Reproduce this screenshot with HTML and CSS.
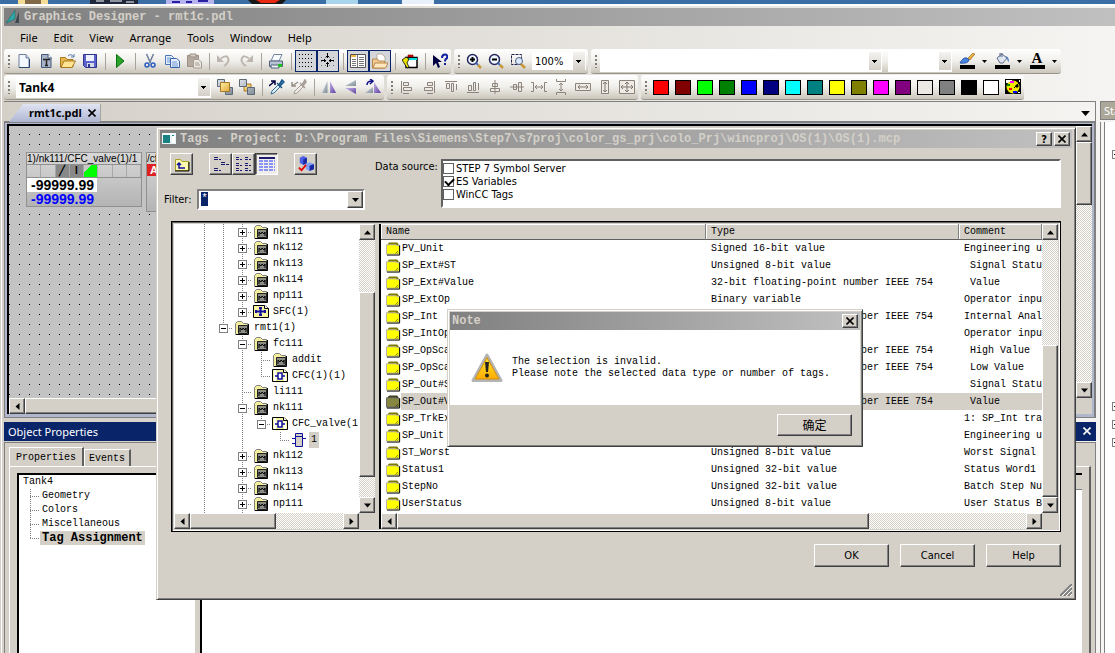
FILE: index.html
```
<!DOCTYPE html>
<html lang="en">
<head>
    <meta charset="UTF-8">
    <meta name="viewport" content="width=device-width, initial-scale=1.0">
    <title>Graphics Designer - rmt1c.pdl</title>
    <link rel="stylesheet" href="styles.css">
</head>
<body>
    <svg class="defs" aria-hidden="true">
        <defs>
            <linearGradient id="gold" x2="1" y2="1"><stop offset="0" stop-color="#fff0a8"/><stop offset="1" stop-color="#e0a838"/></linearGradient>
            <linearGradient id="steel" x2="1" y2="1"><stop offset="0" stop-color="#dde3ea"/><stop offset="1" stop-color="#7f8c98"/></linearGradient>
            <linearGradient id="violet" x2="1" y2="1"><stop offset="0" stop-color="#c8b8ec"/><stop offset="1" stop-color="#5c3ca0"/></linearGradient>
            <linearGradient id="warn" x2="0" y2="1"><stop offset="0" stop-color="#ffee30"/><stop offset="1" stop-color="#ffa800"/></linearGradient>
        </defs>
        <symbol id="new" viewBox="0 0 16 16"><path d="M3 1.500h7l3 3.500v9.500H3z" fill="#f4f8ff" stroke="#6d7f9c"/><path d="M10 1.500v3.500h3" fill="#cdd8ea" stroke="#6d7f9c"/><path d="M3 14.500h10.500V6" fill="none" stroke="#2e4670"/></symbol>
        <symbol id="tpl" viewBox="0 0 16 16"><path d="M3.500 1.500h7l2.500 3v10H3.500z" fill="#a9b3c8" stroke="#46587c"/><path d="M10 1v4h4" fill="#fff" stroke="#46587c"/><path d="M5 6.500h7M8.500 6.500v6M7 12.500h3" stroke="#222" stroke-width="1.500"/></symbol>
        <symbol id="open" viewBox="0 0 16 16"><path d="M0.500 14V4.500h5l1.500 2h6V14z" fill="#e9b84c" stroke="#a87820"/><path d="M1 14.500L4 8h11.500L12 14.500z" fill="#ffe592" stroke="#a87820"/><path d="M8 3q3-3 6 1M14 1v3h-3" fill="none" stroke="#5b7fae"/></symbol>
        <symbol id="save" viewBox="0 0 16 16"><path d="M1.500 1.500h13v13h-11l-2-2z" fill="#5c63cc" stroke="#30358c"/><path d="M4 2h8v6H4z" fill="#eef2ff"/><path d="M5 10h7v4H5z" fill="#d5d9e8"/><path d="M6 11h2v3H6z" fill="#30358c"/></symbol>
        <symbol id="play" viewBox="0 0 16 16"><path d="M4.500 1.500L12 8l-7.500 6.500z" fill="#2aa52a" stroke="#0b7010"/></symbol>
        <symbol id="cut" viewBox="0 0 16 16"><path d="M4.500 1l4 9M11.500 1l-4 9" stroke="#6b7f9c" stroke-width="1.500"/><circle cx="5" cy="12" r="2" fill="none" stroke="#2b5fc0" stroke-width="1.500"/><circle cx="11" cy="12" r="2" fill="none" stroke="#2b5fc0" stroke-width="1.500"/></symbol>
        <symbol id="copy" viewBox="0 0 16 16"><path d="M1.500 2.500h6l2 2v7h-8z" fill="#e6effc" stroke="#4a76b8"/><path d="M3 5h4M3 7h4M3 9h4" stroke="#6d97d8"/><path d="M6.500 5.500h6l3 2.500v6.500h-9z" fill="#e6effc" stroke="#3a62a8"/><path d="M8 9h5M8 11h6M8 13h6" stroke="#6d97d8"/></symbol>
        <symbol id="paste" viewBox="0 0 16 16"><path d="M1.500 2.500h11v11h-11z" fill="#b5aaa0" stroke="#9a8f85"/><path d="M4 1h6v3H4z" fill="#d7d0c8" stroke="#9a8f85"/><path d="M7.500 6.500h5l3 2.500v6h-8z" fill="#ece8e2" stroke="#a39a90"/><path d="M9 10h4M9 12h5" stroke="#a39a90"/></symbol>
        <symbol id="undo" viewBox="0 0 16 16"><path d="M5 5.500q5-4 7-.500q2 4-4 8" fill="none" stroke="#bdb6ae" stroke-width="2"/><path d="M1 2v7h7z" fill="#bdb6ae"/></symbol>
        <symbol id="redo" viewBox="0 0 16 16"><path d="M11 5.500q-5-4-7-.500q-2 4 4 8" fill="none" stroke="#bdb6ae" stroke-width="2"/><path d="M15 2v7H8z" fill="#bdb6ae"/></symbol>
        <symbol id="print" viewBox="0 0 16 16"><path d="M6 1.500h8L11 8H3z" fill="#f8fbff" stroke="#7084a0"/><path d="M1.500 8h13v5.500h-13z" fill="#b8c4d4" stroke="#50627c"/><path d="M3 12h8v3H3z" fill="#eef2f6" stroke="#50627c"/><path d="M10 11h4v3h-4z" fill="#20c020"/></symbol>
        <symbol id="grid" viewBox="0 0 16 16"><path d="M1 1.500h15M1 5.500h15M1 9.500h15M1 13.500h15" stroke="#000" stroke-dasharray="1 2"/></symbol>
        <symbol id="snap" viewBox="0 0 16 16"><path d="M1 4.500h16M1 8.500h16M1 12.500h16" stroke="#777" stroke-dasharray="1 3"/><path d="M7.500 0v5M7.500 9v5M1 7.500h5M9 7.500h5" stroke="#000"/><path d="M6 3.500h3M6 10.500h3M4.500 6v3M10.500 6v3" stroke="#000"/></symbol>
        <symbol id="props" viewBox="0 0 16 16"><path d="M0.500 1.500h15v13H.5z" fill="#fff" stroke="#555"/><path d="M1 2h5v2H1z" fill="#f0b840"/><path d="M7.500 2v12" stroke="#777"/><path d="M2 6.500h4M2 8.500h4M2 10.500h4M2 12.500h4M9 4.500h5M9 6.500h5M9 8.500h5M9 10.500h5M9 12.500h5" stroke="#777"/></symbol>
        <symbol id="lib" viewBox="0 0 16 16"><path d="M5 1h5l3 3v6H5z" fill="#fff" stroke="#b8b0a0"/><path d="M.5 6h5l1 2h6v7H.5z" fill="#f0cc98" stroke="#b88848"/><path d="M1 15l2-5h13l-2.500 5z" fill="#ffe8c0" stroke="#b88848"/></symbol>
        <symbol id="dyn" viewBox="0 0 16 16"><path d="M4 4.500h11v10H4z" fill="#fff" stroke="#000" stroke-width="1.500"/><path d="M5 5h10v2H5z" fill="#00e0e0"/><path d="M6 2h5v2H6z" fill="#e00000" stroke="#700" stroke-width=".6"/><path d="M0 7l4-3 3 2-2 4 2 4-2 1-3-5z" fill="#e8e000" stroke="#000" stroke-width=".8"/></symbol>
        <symbol id="what" viewBox="0 0 16 16"><path d="M1 2v11l3-3 2 5 2-1-2-5h4z" fill="#000040"/><path d="M10 5q0-3.500 3-3.500t2 3.500Q13 6 13 8.500M13 10v2" fill="none" stroke="#1020a0" stroke-width="2"/></symbol>
        <symbol id="zin" viewBox="0 0 16 16"><circle cx="6.500" cy="6.500" r="5" fill="#eef6ff" stroke="#26265c" stroke-width="1.500"/><path d="M4 6.500h5M6.500 4v5" stroke="#000" stroke-width="2"/><path d="M10 10l2 2" stroke="#3c6cc0" stroke-width="2"/><path d="M12 12l3 3" stroke="#c89838" stroke-width="2.500"/></symbol>
        <symbol id="zout" viewBox="0 0 16 16"><circle cx="6.500" cy="6.500" r="5" fill="#eef6ff" stroke="#26265c" stroke-width="1.500"/><path d="M4 6.500h5" stroke="#000" stroke-width="2"/><path d="M10 10l2 2" stroke="#3c6cc0" stroke-width="2"/><path d="M12 12l3 3" stroke="#c89838" stroke-width="2.500"/></symbol>
        <symbol id="zarea" viewBox="0 0 16 16"><path d="M1.500 1.500h10v10h-10z" fill="none" stroke="#20204c" stroke-dasharray="3 1"/><circle cx="9" cy="8" r="3.500" fill="#dceafc" stroke="#50608c"/><path d="M11 11l4 4" stroke="#c89838" stroke-width="2.500"/></symbol>
        <symbol id="brush" viewBox="0 0 16 11"><path d="M1 10q3-6 7-5l2 2q-1 4-9 3z" fill="#4a86e0" stroke="#2858a8"/><path d="M9 5l5-5 2 1-5 6z" fill="#e8b040" stroke="#806020" stroke-width=".6"/></symbol>
        <symbol id="bucket" viewBox="0 0 16 11"><path d="M3 5l5-4 5 4-4 5H6z" fill="#dfe6f0" stroke="#5c6c88"/><path d="M6 4V0h2v4" fill="none" stroke="#5c6c88"/><path d="M11 3q4 0 4 6q-2-1-2-4z" fill="#4878c0"/></symbol>
        <symbol id="front" viewBox="0 0 16 16"><path d="M.5.5h7v7h-7zM8.500 8.500h7v7h-7z" fill="url(#steel)" stroke="#5c6874"/><path d="M3.500 3.500h9v9h-9z" fill="url(#gold)" stroke="#a87828"/></symbol>
        <symbol id="back" viewBox="0 0 16 16"><path d="M5 5h7v7H5z" fill="url(#gold)" stroke="#a87828"/><path d="M.5.5h7v7h-7zM8.500 8.500h7v7h-7z" fill="url(#steel)" stroke="#5c6874"/></symbol>
        <symbol id="pick" viewBox="0 0 16 16"><path d="M2 15l1-3 6-6 2 2-6 6z" fill="#d8ecf8" stroke="#3c6c94"/><path d="M8 4l5 5M10 6l3-5 2 2-4 4z" stroke="#1c5888" stroke-width="1.500" fill="#3c90cc"/><path d="M0 7l6-5M2 2h4v4" stroke="#000040" stroke-width="1.500" fill="none"/></symbol>
        <symbol id="drop" viewBox="0 0 16 16"><path d="M3 15l1-3 6-6 2 2-6 6z" fill="#eeeae4" stroke="#a8a098"/><path d="M9 4l5 5M11 6l3-5 1 2-3 4z" stroke="#a8a098" stroke-width="1.500" fill="#b8b0a8"/><path d="M7 3L1 7M1 3v4h4" stroke="#989088" stroke-width="1.500" fill="none"/></symbol>
        <symbol id="fliph" viewBox="0 0 16 16"><path d="M6.500 2v12H1z" fill="url(#steel)"/><path d="M9 2v12h6z" fill="url(#violet)"/></symbol>
        <symbol id="flipv" viewBox="0 0 16 16"><path d="M13 1v6H2z" fill="url(#steel)"/><path d="M13 15V9H2z" fill="url(#violet)"/></symbol>
        <symbol id="rot" viewBox="0 0 16 16"><path d="M8 8v6H0z" fill="url(#steel)"/><path d="M9 3l7 11H9z" fill="url(#violet)"/><path d="M2 6q0-4 5-4M5 0l3 2-3 3" fill="none" stroke="#10108c" stroke-width="1.500"/></symbol>
        <symbol id="al" viewBox="0 0 16 16"><path d="M2.500 2v12M4.500 3.500h5v3h-5zM4.500 8.500h8v3h-8zM4 14.500h6" fill="#eeebe5" stroke="#8c847c"/></symbol>
        <symbol id="ar" viewBox="0 0 16 16"><path d="M13.500 2v12M11.500 3.500h-5v3h5zM11.500 8.500h-8v3h8zM12 14.500H6" fill="#eeebe5" stroke="#8c847c"/></symbol>
        <symbol id="at" viewBox="0 0 16 16"><path d="M2 2.500h12M3.500 4.500h3v5h-3zM8.500 4.500h2v8h-2zM13.500 5v6" fill="#eeebe5" stroke="#8c847c"/></symbol>
        <symbol id="ab" viewBox="0 0 16 16"><path d="M2 13.500h12M3.500 11.500h3v-5h-3zM8.500 11.500h2v-8h-2zM13.500 11V4" fill="#eeebe5" stroke="#8c847c"/></symbol>
        <symbol id="ch" viewBox="0 0 16 16"><path d="M8 1v14M5.500 4.500h5v3h-5zM3.500 9.500h9v3h-9z" fill="#eeebe5" stroke="#8c847c"/></symbol>
        <symbol id="cv" viewBox="0 0 16 16"><path d="M1 8h14M4.500 5.500h3v5h-3zM9.500 3.500h3v9h-3z" fill="#eeebe5" stroke="#8c847c"/></symbol>
        <symbol id="sh" viewBox="0 0 16 16"><path d="M0 3.500h2.500v9H0M16 3.500h-2.500v9H16M4 8h8M6 6L4 8l2 2M10 6l2 2-2 2" fill="none" stroke="#8c847c"/></symbol>
        <symbol id="sv" viewBox="0 0 16 16"><path d="M3.500 0v2.500h9V0M3.500 16v-2.500h9V16M8 4v8M6 6l2-2 2 2M6 10l2 2 2-2" fill="none" stroke="#8c847c"/></symbol>
        <symbol id="ww" viewBox="0 0 16 16"><path d="M.5 4.500h15v7H.5z" fill="#eeebe5" stroke="#8c847c"/><path d="M3 8h10M5 6L3 8l2 2M11 6l2 2-2 2" fill="none" stroke="#807870"/></symbol>
        <symbol id="hh" viewBox="0 0 16 16"><path d="M4.500 1.500h7v13h-7z" fill="#eeebe5" stroke="#8c847c"/><path d="M8 3v10M6 5l2-2 2 2M6 11l2 2 2-2" fill="none" stroke="#807870"/></symbol>
        <symbol id="wh" viewBox="0 0 16 16"><path d="M.5 1.500h15v13H.5z" fill="#eeebe5" stroke="#8c847c"/><path d="M2 8h12M8 3v10M6 5l2-2 2 2M6 11l2 2 2-2M4 6L2 8l2 2M12 6l2 2-2 2" fill="none" stroke="#807870"/></symbol>
        <symbol id="palette" viewBox="0 0 16 16"><path d="M0 0h16v15H0z" fill="#000"/><path d="M1 1h6v3H1z" fill="#fff"/><circle cx="8" cy="8" r="6.500" fill="#f0e800"/><path d="M5 2h4v2H5z" fill="#f0f"/><path d="M2 5h3v2H2z" fill="#080"/><path d="M4 9h3v2H4z" fill="red"/><path d="M8 12h4v2H8z" fill="#00f"/><path d="M9 9l6-6M11 6h2v2h-2z" stroke="#000"/><path d="M14 1h1v2h-1zM13 13h2v1h-2z" fill="#fff"/></symbol>
        <symbol id="fold" viewBox="0 0 16 16"><path d="M1.500 14.500v-11l2-2h4l2 2h4v11z" fill="#f2ee9c" stroke="#808080"/><path d="M4.500 13.500v-8h9v8z" fill="#8c8c84" stroke="#222"/><path d="M6 12V8l2 2 1-2 2 2 1-2v4" fill="none" stroke="#000"/><path d="M2 14.500h12.500V4" fill="none" stroke="#000"/></symbol>
        <symbol id="cfc" viewBox="0 0 16 16"><path d="M.5 1.500h11l4 3v9H.5z" fill="#fbf6a0" stroke="#000"/><path d="M3 2v11M13 5v8" stroke="#fff" stroke-width="2"/><path d="M11.500 1.500v3h4" fill="#fff" stroke="#000"/><path d="M6 5h4v6H6zM3 8h3M10 8h3" fill="#fff" stroke="#1010a0" stroke-width="1.500"/></symbol>
        <symbol id="sfc" viewBox="0 0 16 16"><path d="M.5 1.500h11l4 3v9H.5z" fill="#fbf6a0" stroke="#000"/><path d="M11.500 1.500v3h4" fill="#fff" stroke="#000"/><path d="M7.500 3v9M3 7.500h9" stroke="#1010a0" stroke-width="2"/><path d="M6 3h3v2H6zM2 6h2v3H2zM11 6h2v3h-2zM6 10h3v2H6z" fill="#1010a0"/></symbol>
        <symbol id="blk" viewBox="0 0 16 16"><path d="M4.500 1.500h7v13h-7zM4.500 4.500h7M1 6.500h3.500M1 11.500h3.500M11.500 6.500H15" fill="#d4d0c8" stroke="#1010a0"/></symbol>
        <symbol id="tag" viewBox="0 0 16 14"><path d="M2 2q0-2 2-2h8l2 3H2z" fill="#7c7800"/><path d="M.5 2.500h10l2 1h2v9H.5z" fill="#ff0" stroke="#b0b0b0"/><path d="M1 13.500h13.500V3" fill="none" stroke="#000"/><path d="M10 12l3-3M12 12l1-1" stroke="#807c00"/></symbol>
        <symbol id="up" viewBox="0 0 16 16"><path d="M1.500 14.500v-11h5l1.500 2h6.500v9z" fill="#fffbb0" stroke="#a8a020"/><path d="M1 15h14V6" fill="none" stroke="#000"/><path d="M5 7v5h6M3 9l2-2 2 2" fill="none" stroke="#1010a0" stroke-width="1.500"/></symbol>
        <symbol id="lv1" viewBox="0 0 16 16"><path d="M1 1.500h4M1 3.500h4M8 6.500h4M8 8.500h4M1 12.500h4M1 14.500h4" stroke="#1a1a70"/><path d="M6 3.500h2M13 8.500h3M6 14.500h2" stroke="#1a1a70"/></symbol>
        <symbol id="lv2" viewBox="0 0 16 16"><path d="M0 1.500h3M0 3.500h3M0 7.500h3M0 9.500h3M0 12.500h3M0 14.500h3M9 1.500h3M9 3.500h3M9 7.500h3M9 9.500h3M9 12.500h3M9 14.500h3" stroke="#1a1a70"/><path d="M4 3.500h2M4 9.500h2M4 14.500h2M13 3.500h2M13 9.500h2M13 14.500h2" stroke="#1a1a70"/></symbol>
        <symbol id="lv3" viewBox="0 0 16 16"><path d="M0 2h16" stroke="#1a1a70" stroke-width="2"/><path d="M0 5h16M0 8h16M0 11h16M0 14h16" stroke="#2038ff" stroke-dasharray="4 1"/></symbol>
        <symbol id="cubes" viewBox="0 0 18 18"><path d="M2 2l4-2 4 2v6l-4 2-4-2z" fill="#4860e8"/><path d="M6 4l4-2v6l-4 2z" fill="#1828a0"/><path d="M9 9l4-2 5 2v6l-5 2-4-2z" fill="#80a0f8"/><path d="M13 11l5-2v6l-5 2z" fill="#1828a0"/><path d="M1 13l3 3 5-6" fill="none" stroke="#e00000" stroke-width="2"/></symbol>
        <symbol id="da" viewBox="0 0 7 4"><path d="M0 0h7L3.500 4z"/></symbol>
        <symbol id="ua" viewBox="0 0 7 4"><path d="M0 4h7L3.500 0z"/></symbol>
        <symbol id="la" viewBox="0 0 4 7"><path d="M4 0v7L0 3.500z"/></symbol>
        <symbol id="ra" viewBox="0 0 4 7"><path d="M0 0v7l4-3.500z"/></symbol>
        <symbol id="x" viewBox="0 0 8 8"><path d="M.5.5l7 7M7.500.5l-7 7" fill="none" stroke="currentColor" stroke-width="1.600"/></symbol>
    </svg>

    <div class="desktop">
        <svg width="440" height="4"><path d="M18 0h30v4H18z" fill="#f4dc94"/><path d="M25 0h16v4H25z" fill="#806848"/><path d="M90 0h48v4H90z" fill="#20283c"/><path d="M96 1h8M110 1h12M126 2h8" stroke="#fff"/><path d="M166 0h48v4h-48z" fill="#b8b4f0"/><path d="M172 2h8M186 2h6M198 1h10" stroke="#2820a0" stroke-width="2"/><path d="M248 0h38l-4 4h-30z" fill="#181818"/><path d="M256 0h24l-5 3h-14z" fill="#e82810"/><path d="M326 0h32v4h-32z" fill="#a8d4ec"/><path d="M402 0h32v4h-32z" fill="#e8f0fc"/></svg>
    </div>

    <div class="app">
        <header class="titlebar">
            <svg class="app-icon" viewBox="0 0 14 14"><path d="M0 13L9 0v9z" fill="#30a8a8" stroke="#106060" stroke-width=".5"/><path d="M9 13l4-12v12z" fill="#404850"/></svg>
            <h1>Graphics Designer - rmt1c.pdl</h1>
        </header>

        <nav class="menu">
            <button>File</button><button>Edit</button><button>View</button><button>Arrange</button><button>Tools</button><button>Window</button><button>Help</button>
        </nav>

        <div class="toolbars">
            <div class="bar">
                <span class="grip"></span>
                <button class="tb" aria-label="New"><svg><use href="#new"/></svg></button>
                <button class="tb" aria-label="Template"><svg><use href="#tpl"/></svg></button>
                <button class="tb" aria-label="Open"><svg><use href="#open"/></svg></button>
                <button class="tb" aria-label="Save"><svg><use href="#save"/></svg></button>
                <i class="sep"></i>
                <button class="tb" aria-label="Run"><svg><use href="#play"/></svg></button>
                <i class="sep"></i>
                <button class="tb" aria-label="Cut"><svg><use href="#cut"/></svg></button>
                <button class="tb" aria-label="Copy"><svg><use href="#copy"/></svg></button>
                <button class="tb" aria-label="Paste"><svg><use href="#paste"/></svg></button>
                <i class="sep"></i>
                <button class="tb" aria-label="Undo"><svg><use href="#undo"/></svg></button>
                <button class="tb" aria-label="Redo"><svg><use href="#redo"/></svg></button>
                <i class="sep"></i>
                <button class="tb" aria-label="Print"><svg><use href="#print"/></svg></button>
                <i class="sep"></i>
                <button class="tb on" aria-label="Grid"><svg><use href="#grid"/></svg></button>
                <button class="tb on" aria-label="Snap"><svg><use href="#snap"/></svg></button>
                <i class="sep"></i>
                <button class="tb on" aria-label="Properties"><svg><use href="#props"/></svg></button>
                <button class="tb on" aria-label="Library"><svg><use href="#lib"/></svg></button>
                <i class="sep"></i>
                <button class="tb" aria-label="Wizard"><svg><use href="#dyn"/></svg></button>
                <i class="sep"></i>
                <button class="tb" aria-label="Context help"><svg><use href="#what"/></svg></button>
            </div>
            <div class="bar">
                <span class="grip"></span>
                <button class="tb" aria-label="Zoom in"><svg><use href="#zin"/></svg></button>
                <button class="tb" aria-label="Zoom out"><svg><use href="#zout"/></svg></button>
                <button class="tb" aria-label="Zoom area"><svg><use href="#zarea"/></svg></button>
                <select class="combo zoom" aria-label="Zoom"><option>100%</option></select>
            </div>
            <div class="bar">
                <span class="grip"></span>
                <select class="combo font" aria-label="Font"><option></option></select>
                <select class="combo size" aria-label="Font size"><option></option></select>
                <button class="tb ink" aria-label="Line color"><svg><use href="#brush"/></svg></button><button class="more" aria-label="More line colors"><svg><use href="#da"/></svg></button>
                <button class="tb ink" aria-label="Fill color"><svg><use href="#bucket"/></svg></button><button class="more" aria-label="More fill colors"><svg><use href="#da"/></svg></button>
                <button class="tb ink">A</button><button class="more" aria-label="More text colors"><svg><use href="#da"/></svg></button>
            </div>
        </div>

        <div class="toolbars">
            <div class="bar">
                <span class="grip"></span>
                <select class="combo object" aria-label="Object"><option>Tank4</option></select>
                <button class="tb" aria-label="To front"><svg><use href="#front"/></svg></button>
                <button class="tb" aria-label="To back"><svg><use href="#back"/></svg></button>
                <i class="sep"></i>
                <button class="tb" aria-label="Copy properties"><svg><use href="#pick"/></svg></button>
                <button class="tb" aria-label="Assign properties"><svg><use href="#drop"/></svg></button>
                <i class="sep"></i>
                <button class="tb" aria-label="Flip horizontally"><svg><use href="#fliph"/></svg></button>
                <button class="tb" aria-label="Flip vertically"><svg><use href="#flipv"/></svg></button>
                <button class="tb" aria-label="Rotate"><svg><use href="#rot"/></svg></button>
            </div>
            <div class="bar">
                <span class="grip"></span>
                <button class="tb" aria-label="Align left"><svg><use href="#al"/></svg></button>
                <button class="tb" aria-label="Align right"><svg><use href="#ar"/></svg></button>
                <button class="tb" aria-label="Align top"><svg><use href="#at"/></svg></button>
                <button class="tb" aria-label="Align bottom"><svg><use href="#ab"/></svg></button>
                <button class="tb" aria-label="Center horizontally"><svg><use href="#ch"/></svg></button>
                <button class="tb" aria-label="Center vertically"><svg><use href="#cv"/></svg></button>
                <button class="tb" aria-label="Space horizontally"><svg><use href="#sh"/></svg></button>
                <button class="tb" aria-label="Space vertically"><svg><use href="#sv"/></svg></button>
                <button class="tb" aria-label="Same width"><svg><use href="#ww"/></svg></button>
                <button class="tb" aria-label="Same height"><svg><use href="#hh"/></svg></button>
                <button class="tb" aria-label="Same size"><svg><use href="#wh"/></svg></button>
            </div>
            <div class="bar">
                <span class="grip"></span>
                <button class="tb swatch red" aria-label="Red"></button>
                <button class="tb swatch maroon" aria-label="Maroon"></button>
                <button class="tb swatch lime" aria-label="Lime"></button>
                <button class="tb swatch green" aria-label="Green"></button>
                <button class="tb swatch blue" aria-label="Blue"></button>
                <button class="tb swatch navy" aria-label="Navy"></button>
                <button class="tb swatch cyan" aria-label="Cyan"></button>
                <button class="tb swatch teal" aria-label="Teal"></button>
                <button class="tb swatch yellow" aria-label="Yellow"></button>
                <button class="tb swatch olive" aria-label="Olive"></button>
                <button class="tb swatch magenta" aria-label="Magenta"></button>
                <button class="tb swatch purple" aria-label="Purple"></button>
                <button class="tb swatch light" aria-label="Light gray"></button>
                <button class="tb swatch gray" aria-label="Gray"></button>
                <button class="tb swatch black" aria-label="Black"></button>
                <button class="tb swatch white" aria-label="White"></button>
                <button class="tb" aria-label="Palette"><svg><use href="#palette"/></svg></button>
            </div>
        </div>

        <div class="workspace">
            <main class="main">
                <section class="document">
                    <div class="doc-tabs">
                        <button class="doc-tab">rmt1c.pdl <svg><use href="#x"/></svg></button>
                        <button class="doc-list" aria-label="Documents"><svg><use href="#da"/></svg></button>
                    </div>
                    <div class="doc-frame">
                        <div class="canvas">
                            <div class="plate">
                                <div class="plate-name">1)/nk111/CFC_valve(1)/1</div>
                                <div class="cells"><i></i><i></i><i class="dark">╱</i><i class="dark">I</i><i class="ok"></i><i></i><i></i><i></i></div>
                                <div class="pv">-99999.99</div>
                                <div class="sp">-99999.99</div>
                            </div>
                            <div class="plate second">
                                <div class="plate-name">/cf</div>
                                <div class="alarm">A</div>
                            </div>
                        </div>
                        <div class="sb v">
                            <button aria-label="Up"><svg><use href="#ua"/></svg></button>
                            <div class="track"><b class="canvas-v"></b></div>
                            <button aria-label="Down"><svg><use href="#da"/></svg></button>
                        </div>
                        <div class="sb h">
                            <button aria-label="Left"><svg><use href="#la"/></svg></button>
                            <div class="track"><b class="canvas-h"></b></div>
                            <button aria-label="Right"><svg><use href="#ra"/></svg></button>
                        </div>
                        <div class="corner"></div>
                    </div>
                </section>

                <section class="object-props">
                    <header><h2>Object Properties</h2><button aria-label="Close"><svg><use href="#x"/></svg></button></header>
                    <div class="props-body">
                        <div class="tabs"><button class="tab active">Properties</button><button class="tab">Events</button></div>
                        <div class="tab-page">
                            <ul class="props-tree">
                                <li>Tank4
                                    <ul>
                                        <li>Geometry</li>
                                        <li>Colors</li>
                                        <li>Miscellaneous</li>
                                        <li><strong>Tag Assignment</strong></li>
                                    </ul>
                                </li>
                            </ul>
                            <div class="props-list"><div class="props-head"></div></div>
                        </div>
                    </div>
                </section>
            </main>
            <aside class="side">
                <h2>Sta</h2>
                <div class="side-tree"><span class="exp plus"></span><span class="exp plus low"></span><span class="exp plus"></span><span class="exp plus"></span></div>
            </aside>
        </div>
    </div>

    <div class="dialog" role="dialog" aria-labelledby="tags-title">
        <header class="titlebar">
            <svg class="app-icon" viewBox="0 0 14 14"><path d="M0 1h14v11H0z" fill="#e8f4f4"/><path d="M1 3h7v8H1z" fill="#188080"/><path d="M1 2h12" stroke="#fff"/><path d="M10 4h3v7h-3z" fill="#fff"/><path d="M10 3h2v1h-2z" fill="#188080"/></svg>
            <h1 id="tags-title">Tags - Project: D:\Program Files\Siemens\Step7\s7proj\color_gs_prj\colo_Prj\wincproj\OS(1)\OS(1).mcp</h1>
            <button class="sys">?</button>
            <button class="sys" aria-label="Close"><svg><use href="#x"/></svg></button>
        </header>
        <div class="top">
            <div class="left">
                <div class="view-buttons">
                    <button aria-label="Up one level"><svg><use href="#up"/></svg></button>
                    <div>
                        <button aria-label="Small icons"><svg><use href="#lv1"/></svg></button><button aria-label="List"><svg><use href="#lv2"/></svg></button><button class="pressed" aria-label="Details"><svg><use href="#lv3"/></svg></button>
                    </div>
                    <button aria-label="Select"><svg><use href="#cubes"/></svg></button>
                </div>
                <div class="filter">
                    <label for="filter">Filter:</label>
                    <div class="filter-box"><span class="mark">*</span><input id="filter" type="text"><button class="raised" aria-label="Open list"><svg><use href="#da"/></svg></button></div>
                </div>
            </div>
            <span class="source-label" id="src">Data source:</span>
            <div class="sources" role="group" aria-labelledby="src">
                <label><input type="checkbox">STEP 7 Symbol Server</label>
                <label><input type="checkbox" checked>ES Variables</label>
                <label><input type="checkbox">WinCC Tags</label>
            </div>
        </div>

        <div class="panes">
            <div class="pane tree-pane">
                <ul class="tree">
                    <li><i class="v"></i><i class="v"></i><i class="t"><span class="exp plus"></span></i><svg><use href="#fold"/></svg><span>nk111</span></li>
                    <li><i class="v"></i><i class="v"></i><i class="t"><span class="exp plus"></span></i><svg><use href="#fold"/></svg><span>nk112</span></li>
                    <li><i class="v"></i><i class="v"></i><i class="t"><span class="exp plus"></span></i><svg><use href="#fold"/></svg><span>nk113</span></li>
                    <li><i class="v"></i><i class="v"></i><i class="t"><span class="exp plus"></span></i><svg><use href="#fold"/></svg><span>nk114</span></li>
                    <li><i class="v"></i><i class="v"></i><i class="t"><span class="exp plus"></span></i><svg><use href="#fold"/></svg><span>np111</span></li>
                    <li><i class="v"></i><i class="v"></i><i class="l"><span class="exp plus"></span></i><svg><use href="#sfc"/></svg><span>SFC(1)</span></li>
                    <li><i class="v"></i><i class="l"><span class="exp"></span></i><svg><use href="#fold"/></svg><span>rmt1(1)</span></li>
                    <li><i class="v"></i><i></i><i class="t"><span class="exp"></span></i><svg><use href="#fold"/></svg><span>fc111</span></li>
                    <li><i class="v"></i><i></i><i class="v"></i><i class="t"></i><svg><use href="#fold"/></svg><span>addit</span></li>
                    <li><i class="v"></i><i></i><i class="v"></i><i class="l"></i><svg><use href="#cfc"/></svg><span>CFC(1)(1)</span></li>
                    <li><i class="v"></i><i></i><i class="t"></i><svg><use href="#fold"/></svg><span>li111</span></li>
                    <li><i class="v"></i><i></i><i class="t"><span class="exp"></span></i><svg><use href="#fold"/></svg><span>nk111</span></li>
                    <li><i class="v"></i><i></i><i class="v"></i><i class="l"><span class="exp"></span></i><svg><use href="#cfc"/></svg><span>CFC_valve(1)</span></li>
                    <li><i class="v"></i><i></i><i class="v"></i><i></i><i class="l"></i><svg><use href="#blk"/></svg><span class="current">1</span></li>
                    <li><i class="v"></i><i></i><i class="t"><span class="exp plus"></span></i><svg><use href="#fold"/></svg><span>nk112</span></li>
                    <li><i class="v"></i><i></i><i class="t"><span class="exp plus"></span></i><svg><use href="#fold"/></svg><span>nk113</span></li>
                    <li><i class="v"></i><i></i><i class="t"><span class="exp plus"></span></i><svg><use href="#fold"/></svg><span>nk114</span></li>
                    <li><i class="v"></i><i></i><i class="t"><span class="exp plus"></span></i><svg><use href="#fold"/></svg><span>np111</span></li>
                    <li><i class="v"></i><i></i><i class="l"></i><svg><use href="#sfc"/></svg></li>
                </ul>
                <div class="sb v">
                    <button aria-label="Up"><svg><use href="#ua"/></svg></button>
                    <div class="track"><b class="tree-v"></b></div>
                    <button aria-label="Down"><svg><use href="#da"/></svg></button>
                </div>
                <div class="sb h">
                    <button aria-label="Left"><svg><use href="#la"/></svg></button>
                    <div class="track"><b class="tree-h"></b></div>
                    <button aria-label="Right"><svg><use href="#ra"/></svg></button>
                </div>
                <div class="corner"></div>
            </div>
            <div class="pane list-pane">
                <div class="list">
                    <table>
                        <thead><tr><th class="c-name">Name</th><th class="c-type">Type</th><th>Comment</th></tr></thead>
                        <tbody>
                            <tr><td><svg><use href="#tag"/></svg><span>PV_Unit</span></td><td>Signed 16-bit value</td><td>Engineering unit</td></tr>
                            <tr><td><svg><use href="#tag"/></svg><span>SP_Ext#ST</span></td><td>Unsigned 8-bit value</td><td> Signal Status</td></tr>
                            <tr><td><svg><use href="#tag"/></svg><span>SP_Ext#Value</span></td><td>32-bit floating-point number IEEE 754</td><td> Value</td></tr>
                            <tr><td><svg><use href="#tag"/></svg><span>SP_ExtOp</span></td><td>Binary variable</td><td>Operator input</td></tr>
                            <tr><td><svg><use href="#tag"/></svg><span>SP_Int</span></td><td>32-bit floating-point number IEEE 754</td><td>Internal Analog</td></tr>
                            <tr><td><svg><use href="#tag"/></svg><span>SP_IntOp</span></td><td>Binary variable</td><td>Operator input</td></tr>
                            <tr><td><svg><use href="#tag"/></svg><span>SP_OpScale#High</span></td><td>32-bit floating-point number IEEE 754</td><td> High Value</td></tr>
                            <tr><td><svg><use href="#tag"/></svg><span>SP_OpScale#Low</span></td><td>32-bit floating-point number IEEE 754</td><td> Low Value</td></tr>
                            <tr><td><svg><use href="#tag"/></svg><span>SP_Out#ST</span></td><td>Unsigned 8-bit value</td><td> Signal Status</td></tr>
                            <tr class="selected"><td><svg><use href="#tag"/></svg><span>SP_Out#Value</span></td><td>32-bit floating-point number IEEE 754</td><td> Value</td></tr>
                            <tr><td><svg><use href="#tag"/></svg><span>SP_TrkExt</span></td><td>Binary variable</td><td>1: SP_Int tracks</td></tr>
                            <tr><td><svg><use href="#tag"/></svg><span>SP_Unit</span></td><td>Signed 16-bit value</td><td>Engineering unit</td></tr>
                            <tr><td><svg><use href="#tag"/></svg><span>ST_Worst</span></td><td>Unsigned 8-bit value</td><td>Worst Signal</td></tr>
                            <tr><td><svg><use href="#tag"/></svg><span>Status1</span></td><td>Unsigned 32-bit value</td><td>Status Word1</td></tr>
                            <tr><td><svg><use href="#tag"/></svg><span>StepNo</span></td><td>Unsigned 32-bit value</td><td>Batch Step Number</td></tr>
                            <tr><td><svg><use href="#tag"/></svg><span>UserStatus</span></td><td>Unsigned 8-bit value</td><td>User Status Bits</td></tr>
                        </tbody>
                    </table>
                </div>
                <div class="sb v">
                    <button aria-label="Up"><svg><use href="#ua"/></svg></button>
                    <div class="track"><b class="list-v"></b></div>
                    <button aria-label="Down"><svg><use href="#da"/></svg></button>
                </div>
                <div class="sb h">
                    <button aria-label="Left"><svg><use href="#la"/></svg></button>
                    <div class="track"><b class="list-h"></b></div>
                    <button aria-label="Right"><svg><use href="#ra"/></svg></button>
                </div>
                <div class="corner"></div>
            </div>
        </div>

        <footer>
            <button class="push">OK</button>
            <button class="push">Cancel</button>
            <button class="push">Help</button>
        </footer>
        <svg class="resize" width="12" height="12"><path d="M0 12L12 0M4 12l8-8M8 12l4-4" stroke="#808080" stroke-width="2"/><path d="M2 12L12 2M6 12l6-6M10 12l2-2" stroke="#fff"/></svg>
    </div>

    <div class="note" role="alertdialog" aria-labelledby="note-title">
        <header class="titlebar">
            <h1 id="note-title">Note</h1>
            <button class="sys" aria-label="Close"><svg><use href="#x"/></svg></button>
        </header>
        <div class="message">
            <svg width="32" height="30" viewBox="0 0 32 30"><path d="M16 2L30 27.500H2z" fill="url(#warn)" stroke="#b4b4b4" stroke-width="3" stroke-linejoin="round"/><path d="M16 4.500L28 26H4z" fill="none" stroke="#d89000"/><path d="M14 9h4l-1 10h-2z" fill="#222"/><circle cx="16" cy="22.500" r="2" fill="#222"/></svg>
            <p>The selection is invalid.<br>Please note the selected data type or number of tags.</p>
        </div>
        <footer><button class="push">确定</button></footer>
    </div>
</body>
</html>
```
FILE: styles.css
```
* {
    margin: 0;
    padding: 0;
    box-sizing: border-box;
}

body {
    height: 100vh;
    overflow: hidden;
    display: flex;
    flex-direction: column;
    background: #d4d0c8;
    color: #000;
    font-family: "DejaVu Sans Condensed", "Noto Sans", sans-serif;
    font-size: 11px;
}

button, input, select {
    font: inherit;
    color: inherit;
    border: none;
    border-radius: 0;
    background: none;
    appearance: none;
}

ul {
    list-style: none;
}

i {
    font-style: normal;
}

.defs {
    position: absolute;
    width: 0;
    height: 0;
}

.desktop {
    height: 4px;
    background: #3a6ea5;
    overflow: hidden;
}

.desktop svg {
    display: block;
}

/* main window */
.app {
    flex: 1;
    min-height: 0;
    display: flex;
    flex-direction: column;
    padding: 2px 0 0 4px;
    border-top: 2px solid #fff;
    box-shadow: inset 1px 0 #d4d0c8, inset 2px 0 #fff;
    background: linear-gradient(90deg, #d4d0c8, #f5f4f2);
}

.titlebar {
    display: flex;
    align-items: center;
    height: 18px;
    gap: 2px;
    padding: 0 2px;
    background: linear-gradient(90deg, #808080, #c0c0c0);
    color: #d4d0c8;
}

.titlebar h1 {
    flex: 1;
    font: bold 12px/18px "Liberation Mono", monospace;
    white-space: nowrap;
}

.app-icon {
    width: 14px;
    height: 14px;
    margin-right: 2px;
}

.menu {
    display: flex;
    height: 23px;
    padding: 0 8px;
    font: 11px/22px "Noto Sans", sans-serif;
}

.menu button {
    padding: 0 8px;
}

.toolbars {
    display: flex;
    gap: 3px;
    height: 26px;
}

.bar {
    display: flex;
    align-items: center;
    height: 25px;
    border-radius: 3px;
    border-bottom: 1px solid #98948c;
    background: linear-gradient(#fff, #f0efeb 50%, #cbc6bb);
}

.grip {
    width: 9px;
    height: 13px;
    background: linear-gradient(#807c74 50%, transparent 50%) 4px 0 / 2px 4px repeat-y;
}

.tb {
    display: flex;
    align-items: center;
    justify-content: center;
    width: 22px;
    height: 22px;
}

.tb svg {
    width: 16px;
    height: 16px;
}

.tb.on {
    border: 1px solid #0a246a;
    background: #d4d5d8;
}

.sep {
    width: 1px;
    height: 17px;
    margin: 0 3px 0 4px;
    background: #a8a49c;
}

.combo {
    height: 22px;
    padding: 0 3px;
    background:
        linear-gradient(#000, #000) right 5px top calc(50% - 1px) / 5px 1px no-repeat,
        linear-gradient(#000, #000) right 6px top 50% / 3px 1px no-repeat,
        linear-gradient(#000, #000) right 7px top calc(50% + 1px) / 1px 1px no-repeat,
        linear-gradient(#f4f3f0, #d4d0c8) right 1px center / 12px 18px no-repeat,
        #fff;
}

.zoom {
    width: 54px;
    height: 18px;
    margin: 0 2px 0 3px;
}

.font {
    width: 282px;
    margin-right: 6px;
}

.size {
    width: 64px;
    margin-right: 4px;
}

.object {
    width: 195px;
    margin: 0 3px;
    font: bold 12px "Noto Sans", sans-serif;
}

.ink {
    flex-direction: column;
    gap: 1px;
    font: bold 15px/11px "Liberation Serif", serif;
}

.ink::after {
    content: "";
    width: 15px;
    height: 4px;
    background: #000;
}

.ink svg {
    height: 11px;
}

.more {
    display: flex;
    align-items: center;
    justify-content: center;
    width: 13px;
    height: 22px;
}

.more svg {
    width: 5px;
    height: 3px;
}

.swatch {
    width: 16px;
    height: 15px;
    margin: 0 3px;
    border: 1px solid #000;
}

.red { background: #f00; }
.maroon { background: #800000; }
.lime { background: #0f0; }
.green { background: #008000; }
.blue { background: #00f; }
.navy { background: #000080; }
.cyan { background: #0ff; }
.teal { background: #008080; }
.yellow { background: #ff0; }
.olive { background: #808000; }
.magenta { background: #f0f; }
.purple { background: #800080; }
.light { background: #ece9e4; }
.gray { background: #808080; }
.black { background: #000; }
.white { background: #fff; }

.workspace {
    flex: 1;
    min-height: 0;
    display: flex;
    gap: 4px;
}

.main {
    flex: 1;
    min-width: 0;
    display: flex;
    flex-direction: column;
    gap: 4px;
}

.document {
    flex: 317 1 0;
    min-height: 0;
    display: flex;
    flex-direction: column;
    border-top: 1px solid #808080;
    border-right: 1px solid #808080;
}

.doc-tabs {
    display: flex;
    justify-content: space-between;
    height: 20px;
    padding: 2px 5px 0;
    border-bottom: 1px solid #808080;
}

.doc-tab {
    height: 18px;
    padding: 0 4px 0 20px;
    background: linear-gradient(#e0e4f2, #aeb6d2);
    border-right: 1px solid #808080;
    clip-path: polygon(14px 0, 100% 0, 100% 100%, 0 100%);
    font: bold 11px/18px "Noto Sans", sans-serif;
}

.doc-tab svg {
    width: 8px;
    height: 8px;
    margin-left: 3px;
}

.doc-list svg {
    width: 9px;
    height: 5px;
}

.doc-frame {
    flex: 1;
    min-height: 0;
    display: grid;
    grid-template: minmax(0, 1fr) 16px / minmax(0, 1fr) 16px;
    border: solid #b0b6cc;
    border-width: 2px 3px 4px 3px;
    outline: 1px solid #808080;
    outline-offset: -1px;
    box-shadow: inset 2px 2px #000;
    padding: 2px 0 0 2px;
}

.canvas {
    display: flex;
    align-items: flex-start;
    gap: 4px;
    padding: 26px 17px;
    background: conic-gradient(from 90deg at 9px 9px, #000 25%, #c3c3c3 0) 1px 9px / 10px 10px;
    overflow: hidden;
}

.plate {
    flex: none;
    width: 116px;
    border: 1px solid #909090;
    background: linear-gradient(#d8d8d8, #b4b4b4);
    font-family: "Liberation Sans", sans-serif;
}

.plate-name {
    height: 11px;
    font-size: 10px;
    line-height: 11px;
    white-space: nowrap;
}

.cells {
    display: flex;
    height: 14px;
    border: solid #909090;
    border-width: 1px 0;
}

.cells i {
    flex: 1;
    border-right: 1px solid #a8a8a8;
    font: bold 10px/12px "Liberation Sans", sans-serif;
    text-align: center;
}

.cells .dark {
    background: #888;
}

.cells .ok {
    background: linear-gradient(135deg, #c8c8c8 30%, #0f0 30%);
}

.pv, .sp {
    width: 70px;
    padding-left: 4px;
    font-weight: bold;
    font-size: 14px;
    line-height: 14px;
}

.pv {
    background: #fff;
}

.sp {
    color: #00f;
}

.second {
    height: 60px;
}

.alarm {
    width: 30px;
    padding-left: 3px;
    background: #e02020;
    color: #fff;
    font: bold 11px/12px "Liberation Sans", sans-serif;
}

/* scroll bars */
.sb {
    display: flex;
    background: conic-gradient(#fff 25%, #d4d0c8 0 50%, #fff 0 75%, #d4d0c8 0) 0 0 / 2px 2px;
}

.sb.v {
    flex-direction: column;
}

.sb button, .track b, .raised, .sys, .push, .view-buttons button {
    border: 1px solid;
    border-color: #fff #404040 #404040 #fff;
    box-shadow: inset -1px -1px #808080;
    background: #d4d0c8;
}

.sb button {
    flex: none;
    display: flex;
    align-items: center;
    justify-content: center;
    width: 16px;
    height: 16px;
}

.sb svg {
    width: 7px;
    height: 7px;
}

.track {
    flex: 1;
    min-height: 0;
    display: flex;
}

.v .track {
    flex-direction: column;
}

.canvas-v { height: 26%; }
.canvas-h { width: 60%; }
.tree-v { height: 72%; margin-top: auto; margin-bottom: 20px; }
.tree-h { width: 56%; }
.list-v { height: 59%; margin-top: auto; }
.list-h { width: 75%; }

.corner {
    background: #d4d0c8;
}

/* object properties */
.object-props {
    flex: 231 1 0;
    min-height: 0;
    display: flex;
    flex-direction: column;
}

.object-props header {
    display: flex;
    justify-content: space-between;
    align-items: center;
    height: 19px;
    padding: 0 5px 0 4px;
    background: #0a246a;
    color: #fff;
}

.object-props h2 {
    font: 11px/19px "Noto Sans", sans-serif;
}

.object-props header svg {
    width: 8px;
    height: 8px;
}

.props-body {
    flex: 1;
    min-height: 0;
    display: flex;
    flex-direction: column;
    margin-top: 1px;
    padding: 4px 4px 0;
    border: solid #808080;
    border-width: 1px 1px 0;
    background: #d4d0c8;
}

.tabs {
    display: flex;
    align-items: flex-end;
    height: 19px;
}

.tab {
    height: 17px;
    padding: 0 4px;
    border: solid;
    border-width: 1px 2px 0 1px;
    border-color: #fff #606060 #fff #fff;
    font: 10px/17px "Liberation Mono", monospace;
}

.tab.active {
    height: 19px;
    padding: 0 6px;
}

.tab-page {
    flex: 1;
    display: flex;
    gap: 5px;
    padding: 6px 7px 0;
    border: solid;
    border-width: 1px 2px 0 1px;
    border-color: #fff #606060 #fff #fff;
}

.props-tree {
    width: 178px;
    padding: 0 4px;
    border: solid #000;
    border-width: 2px 0 0 2px;
    background: #fff;
    font: 10px/14px "Liberation Mono", monospace;
}

.props-tree ul {
    padding-left: 7px;
}

.props-tree ul li {
    display: flex;
    height: 14px;
    background:
        repeating-linear-gradient(#808080 0 1px, transparent 1px 2px) 0 0 / 1px 100% no-repeat,
        repeating-linear-gradient(90deg, #808080 0 1px, transparent 1px 2px) 0 7px / 10px 1px no-repeat;
    padding-left: 12px;
}

.props-tree ul li:last-child {
    background-size: 1px 8px, 10px 1px;
    padding-left: 10px;
}

.props-tree strong {
    padding: 0 2px;
    background: #d4d0c8;
    font-size: 12px;
}

.props-list {
    flex: 1;
    border: solid #000;
    border-width: 2px 0 0 2px;
    background: #fff;
}

.props-head {
    height: 15px;
    border-bottom: 1px solid #808080;
    background: #d4d0c8;
}

.side {
    width: 15px;
    display: flex;
    flex-direction: column;
    gap: 2px;
    overflow: hidden;
}

.side h2 {
    height: 19px;
    padding-left: 3px;
    border: 1px solid #808080;
    border-right: none;
    background: #aca899;
    color: #fff;
    font: 11px/17px "Noto Sans", sans-serif;
}

.side-tree {
    flex: 1;
    display: flex;
    flex-direction: column;
    gap: 9px;
    padding: 28px 0 0 11px;
    background: #fff;
    border-left: 1px solid #808080;
    box-shadow: inset 3px 0 #f5f4f2, inset 4px 0 #808080;
}

.side-tree .low {
    margin-top: 234px;
}

.exp {
    flex: none;
    display: block;
    width: 9px;
    height: 9px;
    border: 1px solid #808080;
    background: linear-gradient(#000, #000) 1px 3px / 5px 1px no-repeat, #fff;
}

.exp.plus {
    background: linear-gradient(#000, #000) 1px 3px / 5px 1px no-repeat, linear-gradient(#000, #000) 3px 1px / 1px 5px no-repeat, #fff;
}

/* tag selection dialog, floats over the main window */
.dialog, .note {
    position: absolute;
    display: flex;
    flex-direction: column;
    border: 1px solid;
    border-color: #d4d0c8 #404040 #404040 #d4d0c8;
    box-shadow: inset 1px 1px #fff, inset -1px -1px #808080;
    background: #d4d0c8;
}

.dialog {
    left: 156px;
    top: 127px;
    right: 39px;
    bottom: 53px;
    padding: 2px 3px 0;
}

.sys {
    display: flex;
    align-items: center;
    justify-content: center;
    width: 16px;
    height: 14px;
    color: #000;
    font-weight: bold;
}

.sys svg {
    width: 8px;
    height: 8px;
}

.top {
    display: flex;
    height: 73px;
    padding: 11px 11px 0 4px;
}

.left {
    width: 201px;
}

.view-buttons {
    display: flex;
    gap: 16px;
    margin: -6px 0 0 6px;
}

.view-buttons div {
    display: flex;
}

.view-buttons button {
    display: flex;
    align-items: center;
    justify-content: center;
    width: 23px;
    height: 22px;
}

.view-buttons svg {
    width: 16px;
    height: 16px;
}

.view-buttons .pressed {
    border-color: #404040 #fff #fff #404040;
    box-shadow: inset 1px 1px #808080;
    background: #f0eeea;
}

.filter {
    display: flex;
    justify-content: space-between;
    align-items: center;
    margin-top: 14px;
}

.filter-box {
    display: flex;
    width: 168px;
    height: 21px;
    border: 2px solid;
    border-color: #808080 #fff #fff #808080;
    background: #fff;
}

.filter-box input {
    flex: 1;
    min-width: 0;
}

.mark {
    width: 7px;
    margin: 1px 0 2px 2px;
    background: #0a246a;
    color: #fff;
    font-family: "Liberation Mono", monospace;
    text-align: center;
}

.filter-box button {
    display: flex;
    align-items: center;
    justify-content: center;
    width: 16px;
}

.filter-box svg {
    width: 7px;
    height: 4px;
}

.source-label {
    width: 76px;
    padding: 1px 0 0 10px;
    white-space: nowrap;
}

.sources {
    flex: 1;
    height: 49px;
    padding-top: 1px;
    border: 2px solid;
    border-color: #606060 #fff #fff #606060;
    background: #fff;
}

.sources label {
    display: flex;
    align-items: center;
    gap: 2px;
    height: 13px;
}

.sources input {
    width: 11px;
    height: 11px;
    border: 1px solid #606060;
}

.sources input:checked::after {
    content: "";
    display: block;
    width: 7px;
    height: 4px;
    margin: 1px 0 0 1px;
    border: solid #000;
    border-width: 0 0 2px 2px;
    transform: rotate(-45deg);
}

.panes {
    flex: 1;
    min-height: 0;
    display: flex;
    gap: 4px;
    margin: 0 11px;
    padding: 2px;
    border: 1px solid #000;
    box-shadow: inset 1px 1px #606060, inset -1px -1px #fff;
}

.pane {
    display: grid;
    grid-template: minmax(0, 1fr) 16px / minmax(0, 1fr) 16px;
    background: #fff;
    font: 10px/16px "Liberation Mono", monospace;
}

.tree-pane {
    width: 201px;
}

.tree {
    padding-left: 21px;
    overflow: hidden;
}

.tree li {
    display: flex;
    align-items: center;
    height: 16px;
    white-space: nowrap;
}

.tree i {
    flex: none;
    width: 19px;
    height: 16px;
    padding: 4px 5px;
}

.tree .v {
    background: repeating-linear-gradient(#808080 0 1px, transparent 1px 2px) 9px 0 / 1px 100% no-repeat;
}

.tree .t, .tree .l {
    background:
        repeating-linear-gradient(#808080 0 1px, transparent 1px 2px) 9px 0 / 1px 100% no-repeat,
        repeating-linear-gradient(90deg, #808080 0 1px, transparent 1px 2px) 9px 8px / 10px 1px no-repeat;
}

.tree .l {
    background-size: 1px 8px, 10px 1px;
}

.tree svg {
    flex: none;
    width: 16px;
    height: 16px;
    margin: 0 2px 0 1px;
}

.tree span:last-child {
    padding: 0 2px;
}

.tree .current {
    background: #d4d0c8;
}

.list-pane {
    flex: 1;
    min-width: 0;
    border-left: 2px solid #000;
}

.list {
    overflow: hidden;
}

table {
    width: 100%;
    table-layout: fixed;
    border-collapse: separate;
    border-spacing: 0;
}

th {
    height: 16px;
    padding: 0 5px;
    border-right: 1px solid #808080;
    border-bottom: 1px solid #606060;
    background: #d4d0c8;
    box-shadow: inset 1px 1px #fff;
    font-weight: normal;
    line-height: 15px;
    text-align: left;
}

.c-name {
    width: 325px;
}

.c-type {
    width: 253px;
}

td {
    height: 17px;
    padding: 0 0 0 5px;
    white-space: pre;
    overflow: hidden;
    line-height: 17px;
}

td:first-child {
    display: flex;
    align-items: center;
}

td svg {
    width: 15px;
    height: 14px;
    margin-right: 1px;
}

.selected td {
    background: #d4d0c8;
}

.selected td:first-child {
    background: linear-gradient(90deg, #fff 20px, #d4d0c8 20px);
}

.selected svg {
    filter: brightness(0.55) saturate(0.5);
}

.dialog footer {
    display: flex;
    justify-content: flex-end;
    gap: 11px;
    padding: 12px 11px 32px;
}

.push {
    width: 75px;
    height: 23px;
}

.resize {
    position: absolute;
    right: 3px;
    bottom: 3px;
}

/* message box */
.note {
    left: 447px;
    top: 309px;
    width: 416px;
    padding: 2px;
}

.message {
    display: flex;
    align-items: center;
    gap: 9px;
    height: 75px;
    padding: 0 21px;
    background: #fff;
    font: 10px/12px "Liberation Mono", monospace;
}

.note footer {
    padding: 9px 8px 8px;
    text-align: right;
}

.note .push {
    height: 22px;
    font: 12px/18px "Noto Sans CJK SC", sans-serif;
}
```
